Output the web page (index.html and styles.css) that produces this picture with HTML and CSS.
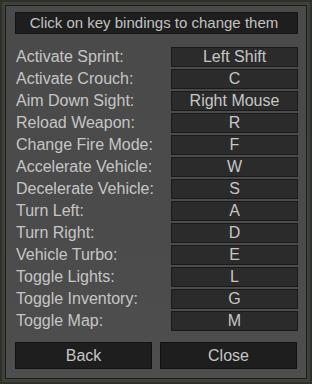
FILE: index.html
```html
<!DOCTYPE html>
<html lang="en">
<head>
    <meta charset="UTF-8">
    <title>Key Bindings</title>
    <link rel="stylesheet" href="styles.css">
</head>
<body>
    <div class="window">
        <div class="panel">
            <div class="hint">Click on key bindings to change them</div>

            <div class="bindings">
                <div class="binding"><span class="label">Activate Sprint:</span><button class="key">Left Shift</button></div>
                <div class="binding"><span class="label">Activate Crouch:</span><button class="key">C</button></div>
                <div class="binding"><span class="label">Aim Down Sight:</span><button class="key">Right Mouse</button></div>
                <div class="binding"><span class="label">Reload Weapon:</span><button class="key">R</button></div>
                <div class="binding"><span class="label">Change Fire Mode:</span><button class="key">F</button></div>
                <div class="binding"><span class="label">Accelerate Vehicle:</span><button class="key">W</button></div>
                <div class="binding"><span class="label">Decelerate Vehicle:</span><button class="key">S</button></div>
                <div class="binding"><span class="label">Turn Left:</span><button class="key">A</button></div>
                <div class="binding"><span class="label">Turn Right:</span><button class="key">D</button></div>
                <div class="binding"><span class="label">Vehicle Turbo:</span><button class="key">E</button></div>
                <div class="binding"><span class="label">Toggle Lights:</span><button class="key">L</button></div>
                <div class="binding"><span class="label">Toggle Inventory:</span><button class="key">G</button></div>
                <div class="binding"><span class="label">Toggle Map:</span><button class="key">M</button></div>
            </div>

            <div class="actions">
                <button class="action-btn">Back</button>
                <button class="action-btn">Close</button>
            </div>
        </div>
    </div>
</body>
</html>
```

FILE: styles.css
```css
* {
    margin: 0;
    padding: 0;
    box-sizing: border-box;
}

body {
    font-family: 'Liberation Sans', Arial, sans-serif;
    background: #2d3129;
    padding: 2px;
    width: 312px;
    height: 384px;
    color: #c6c6c6;
}

.window {
    height: 380px;
    border: 3px solid #3d4139;
}

.panel {
    height: 100%;
    border: 1px solid #1c1c1c;
    background: linear-gradient(180deg, #4a4a4a 0%, #4b4b4b 60%, #4e4e4e 100%);
    padding: 6px 8px 9px 9px;
}

.hint {
    height: 22px;
    background: #1e1e1e;
    border: 1px solid #141414;
    font-size: 15px;
    line-height: 20px;
    text-align: center;
    padding-right: 5px;
    color: #c2c2c2;
}

.bindings {
    margin-top: 13px;
    display: flex;
    flex-direction: column;
    gap: 2px;
}

.binding {
    display: grid;
    grid-template-columns: 1fr 127px;
    align-items: center;
    height: 20px;
}

.label {
    font-size: 16px;
    padding-left: 1px;
    line-height: 20px;
    white-space: nowrap;
}

.key {
    height: 20px;
    background: #2b2b2b;
    border: 1px solid #1a1a1a;
    color: #c6c6c6;
    font-family: inherit;
    font-size: 16px;
    line-height: 18px;
    text-align: center;
    cursor: pointer;
}

.actions {
    margin-top: 11px;
    display: grid;
    grid-template-columns: 137px 137px;
    gap: 8px;
}

.action-btn {
    height: 27px;
    background: #1e1e1e;
    border: 1px solid #121212;
    color: #c6c6c6;
    font-family: inherit;
    font-size: 16px;
    cursor: pointer;
}
```
